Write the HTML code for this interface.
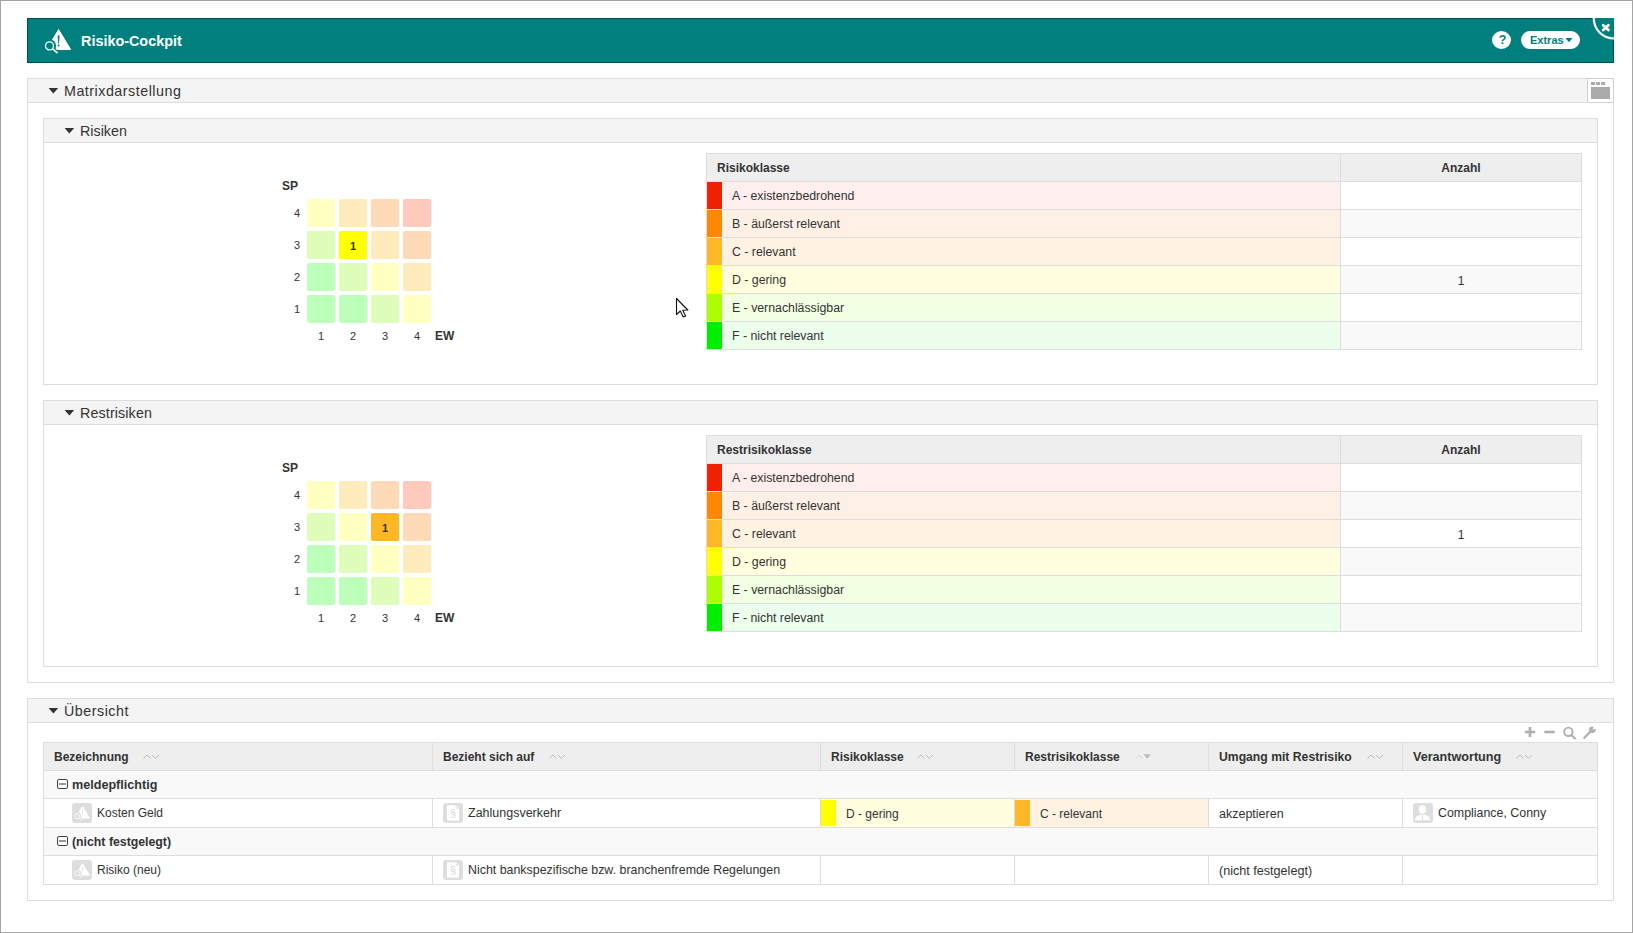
<!DOCTYPE html><html><head><meta charset="utf-8"><style>
*{margin:0;padding:0;box-sizing:border-box}
html,body{width:1633px;height:933px;overflow:hidden;background:#fff}
body{position:relative;font-family:"Liberation Sans",sans-serif;color:#333;font-size:12px}
.a{position:absolute}
.t{position:absolute;white-space:nowrap;line-height:1}
svg{position:absolute;overflow:visible}
.frame{left:0;top:0;width:1633px;height:933px;border:1px solid #a5a5a5}
.hdr{left:27px;top:18px;width:1587px;height:45px;background:#007f7f;border:1px solid #004f4f}
.panel{border:1px solid #ddd;background:#fff}
.ph{background:#f4f4f4;border-bottom:1px solid #ddd}
.tri{width:11px;height:7px}
.cell{position:absolute;width:28px;height:28px;border-radius:2px}
.lbl{position:absolute;font-size:11px;line-height:1;white-space:nowrap}
.ib{position:absolute;width:20px;height:20px;border-radius:3px;background:#dedede}
</style></head><body>
<div class="a frame"></div>
<div class="a" style="left:2px;top:2px;width:1629px;height:2px;background:#fbfbfb"></div>
<div class="a hdr"></div>
<svg style="left:0;top:0" width="1633" height="70" viewBox="0 0 1633 70"><path d="M1592.6 18 A21.4 21.4 0 0 0 1614 39.6 L1614 18 Z" fill="#fff"/><path d="M1594.9 18 A19.1 19.1 0 0 0 1614 37.5 L1614 18 Z" fill="#007f7f"/><path d="M1603.2 25.2 L1608.4 30 M1608.4 25.2 L1603.2 30" stroke="#fff" stroke-width="2.8" stroke-linecap="round"/></svg>
<svg style="left:46px;top:29px" width="30" height="30" viewBox="0 0 30 30"><path d="M12.6 0.6 L24.6 20.4 L0.6 20.4 Z" fill="#fff" stroke="#fff" stroke-width="1" stroke-linejoin="round"/><path d="M11.6 6.8 Q12.6 5.6 13.6 6.8 L13 14.6 L12.2 14.6 Z" fill="#007f7f"/><circle cx="12.6" cy="16.6" r="1" fill="#007f7f"/><circle cx="3.5" cy="16.9" r="6.6" fill="#007f7f"/><path d="M7.3 20.5 L12.5 25" stroke="#007f7f" stroke-width="4.2"/><circle cx="3.5" cy="16.9" r="4" fill="none" stroke="#fff" stroke-width="1.3"/><path d="M6.6 19.8 L11.6 24.1" stroke="#fff" stroke-width="1.6"/></svg>
<div class="t" style="left:81px;top:34px;font-size:14.4px;font-weight:bold;color:#fff">Risiko-Cockpit</div>
<div class="a" style="left:1492px;top:31px;width:19px;height:18px;border-radius:50%;background:#fff"></div>
<div class="t" style="left:1493px;top:34px;width:19px;text-align:center;font-size:12.5px;font-weight:bold;color:#007f7f">?</div>
<div class="a" style="left:1521px;top:31px;width:59px;height:18px;border-radius:9px;background:#fff"></div>
<div class="t" style="left:1530px;top:35px;font-size:11px;font-weight:bold;color:#007f7f">Extras</div>
<svg style="left:1565px;top:38px" width="8" height="5" viewBox="0 0 8 5"><path d="M0.5 0 L7.5 0 L4 4.2 Z" fill="#007f7f"/></svg>
<div class="a panel" style="left:27px;top:78px;width:1587px;height:605px"></div>
<div class="a ph" style="left:28px;top:79px;width:1585px;height:24px"></div>
<svg style="left:48px;top:88px" width="11" height="7" viewBox="0 0 11 7"><path d="M0.6 0 L10.2 0 L5.4 5.4 Z" fill="#333"/></svg>
<div class="t" style="left:64px;top:84px;font-size:14.3px;letter-spacing:0.5px">Matrixdarstellung</div>
<div class="a" style="left:1587px;top:78px;width:27px;height:25px;border:1px solid #d0d0d0;background:#fff"></div>
<div class="a" style="left:1591px;top:82px;width:4px;height:3px;background:#aaa"></div>
<div class="a" style="left:1596px;top:82px;width:4px;height:3px;background:#aaa"></div>
<div class="a" style="left:1601px;top:82px;width:4px;height:3px;background:#aaa"></div>
<div class="a" style="left:1591px;top:87px;width:19px;height:12px;background:#aaa"></div>
<div class="a panel" style="left:43px;top:118px;width:1555px;height:267px"></div>
<div class="a ph" style="left:44px;top:119px;width:1553px;height:24px"></div>
<svg style="left:64px;top:128px" width="11" height="7" viewBox="0 0 11 7"><path d="M0.6 0 L10.2 0 L5.4 5.4 Z" fill="#333"/></svg>
<div class="t" style="left:80px;top:124px;font-size:14.3px;letter-spacing:0px">Risiken</div>
<div class="cell" style="left:307px;top:199px;background:#ffffc0"></div>
<div class="cell" style="left:339px;top:199px;background:#ffebbb"></div>
<div class="cell" style="left:371px;top:199px;background:#ffdab8"></div>
<div class="cell" style="left:403px;top:199px;background:#ffc9bb"></div>
<div class="cell" style="left:307px;top:231px;background:#ddfdb9"></div>
<div class="cell" style="left:339px;top:231px;background:#ffff00"><span style="position:absolute;left:0;top:10px;width:28px;text-align:center;font-size:11px;font-weight:bold;line-height:1">1</span></div>
<div class="cell" style="left:371px;top:231px;background:#ffebbb"></div>
<div class="cell" style="left:403px;top:231px;background:#ffdab8"></div>
<div class="cell" style="left:307px;top:263px;background:#bbffbb"></div>
<div class="cell" style="left:339px;top:263px;background:#ddfdb9"></div>
<div class="cell" style="left:371px;top:263px;background:#ffffc0"></div>
<div class="cell" style="left:403px;top:263px;background:#ffebbb"></div>
<div class="cell" style="left:307px;top:295px;background:#bbffbb"></div>
<div class="cell" style="left:339px;top:295px;background:#bbffbb"></div>
<div class="cell" style="left:371px;top:295px;background:#ddfdb9"></div>
<div class="cell" style="left:403px;top:295px;background:#ffffc0"></div>
<div class="lbl" style="left:282px;top:180px;font-weight:bold;font-size:12px">SP</div>
<div class="lbl" style="left:294px;top:208px">4</div>
<div class="lbl" style="left:294px;top:240px">3</div>
<div class="lbl" style="left:294px;top:272px">2</div>
<div class="lbl" style="left:294px;top:304px">1</div>
<div class="lbl" style="left:318px;top:331px">1</div>
<div class="lbl" style="left:350px;top:331px">2</div>
<div class="lbl" style="left:382px;top:331px">3</div>
<div class="lbl" style="left:414px;top:331px">4</div>
<div class="lbl" style="left:435px;top:330px;font-weight:bold;font-size:12px">EW</div>
<div class="a" style="left:706px;top:153px;width:876px;height:197px;border:1px solid #ddd;background:#fff"></div>
<div class="a" style="left:707px;top:154px;width:874px;height:28px;background:#eee;border-bottom:1px solid #ddd"></div>
<div class="a" style="left:1340px;top:154px;width:1px;height:195px;background:#ddd"></div>
<div class="t" style="left:717px;top:162px;font-size:12px;font-weight:bold">Risikoklasse</div>
<div class="t" style="left:1341px;width:240px;text-align:center;top:162px;font-size:12px;font-weight:bold">Anzahl</div>
<div class="a" style="left:707px;top:182px;width:633px;height:27px;background:#ffeeee"></div>
<div class="a" style="left:707px;top:182px;width:15px;height:27px;background:#ee2200"></div>
<div class="a" style="left:1341px;top:182px;width:240px;height:27px;background:#fff"></div>
<div class="a" style="left:707px;top:209px;width:874px;height:1px;background:#ddd"></div>
<div class="t" style="left:732px;top:190px;font-size:12.3px">A - existenzbedrohend</div>
<div class="a" style="left:707px;top:210px;width:633px;height:27px;background:#fff0e5"></div>
<div class="a" style="left:707px;top:210px;width:15px;height:27px;background:#ff8800"></div>
<div class="a" style="left:1341px;top:210px;width:240px;height:27px;background:#f9f9f9"></div>
<div class="a" style="left:707px;top:237px;width:874px;height:1px;background:#ddd"></div>
<div class="t" style="left:732px;top:218px;font-size:12.3px">B - äußerst relevant</div>
<div class="a" style="left:707px;top:238px;width:633px;height:27px;background:#fff2e3"></div>
<div class="a" style="left:707px;top:238px;width:15px;height:27px;background:#ffb726"></div>
<div class="a" style="left:1341px;top:238px;width:240px;height:27px;background:#fff"></div>
<div class="a" style="left:707px;top:265px;width:874px;height:1px;background:#ddd"></div>
<div class="t" style="left:732px;top:246px;font-size:12.3px">C - relevant</div>
<div class="a" style="left:707px;top:266px;width:633px;height:27px;background:#ffffe0"></div>
<div class="a" style="left:707px;top:266px;width:15px;height:27px;background:#ffff00"></div>
<div class="a" style="left:1341px;top:266px;width:240px;height:27px;background:#f9f9f9"></div>
<div class="a" style="left:707px;top:293px;width:874px;height:1px;background:#ddd"></div>
<div class="t" style="left:732px;top:274px;font-size:12.3px">D - gering</div>
<div class="t" style="left:1341px;width:240px;text-align:center;top:275px;font-size:12px">1</div>
<div class="a" style="left:707px;top:294px;width:633px;height:27px;background:#f3ffe3"></div>
<div class="a" style="left:707px;top:294px;width:15px;height:27px;background:#aaff00"></div>
<div class="a" style="left:1341px;top:294px;width:240px;height:27px;background:#fff"></div>
<div class="a" style="left:707px;top:321px;width:874px;height:1px;background:#ddd"></div>
<div class="t" style="left:732px;top:302px;font-size:12.3px">E - vernachlässigbar</div>
<div class="a" style="left:707px;top:322px;width:633px;height:27px;background:#ecfeec"></div>
<div class="a" style="left:707px;top:322px;width:15px;height:27px;background:#00ee00"></div>
<div class="a" style="left:1341px;top:322px;width:240px;height:27px;background:#f9f9f9"></div>
<div class="t" style="left:732px;top:330px;font-size:12.3px">F - nicht relevant</div>
<div class="a panel" style="left:43px;top:400px;width:1555px;height:267px"></div>
<div class="a ph" style="left:44px;top:401px;width:1553px;height:24px"></div>
<svg style="left:64px;top:410px" width="11" height="7" viewBox="0 0 11 7"><path d="M0.6 0 L10.2 0 L5.4 5.4 Z" fill="#333"/></svg>
<div class="t" style="left:80px;top:406px;font-size:14.3px;letter-spacing:0.12px">Restrisiken</div>
<div class="cell" style="left:307px;top:481px;background:#ffffc0"></div>
<div class="cell" style="left:339px;top:481px;background:#ffebbb"></div>
<div class="cell" style="left:371px;top:481px;background:#ffdab8"></div>
<div class="cell" style="left:403px;top:481px;background:#ffc9bb"></div>
<div class="cell" style="left:307px;top:513px;background:#ddfdb9"></div>
<div class="cell" style="left:339px;top:513px;background:#ffffc0"></div>
<div class="cell" style="left:371px;top:513px;background:#ffb726"><span style="position:absolute;left:0;top:10px;width:28px;text-align:center;font-size:11px;font-weight:bold;line-height:1">1</span></div>
<div class="cell" style="left:403px;top:513px;background:#ffdab8"></div>
<div class="cell" style="left:307px;top:545px;background:#bbffbb"></div>
<div class="cell" style="left:339px;top:545px;background:#ddfdb9"></div>
<div class="cell" style="left:371px;top:545px;background:#ffffc0"></div>
<div class="cell" style="left:403px;top:545px;background:#ffebbb"></div>
<div class="cell" style="left:307px;top:577px;background:#bbffbb"></div>
<div class="cell" style="left:339px;top:577px;background:#bbffbb"></div>
<div class="cell" style="left:371px;top:577px;background:#ddfdb9"></div>
<div class="cell" style="left:403px;top:577px;background:#ffffc0"></div>
<div class="lbl" style="left:282px;top:462px;font-weight:bold;font-size:12px">SP</div>
<div class="lbl" style="left:294px;top:490px">4</div>
<div class="lbl" style="left:294px;top:522px">3</div>
<div class="lbl" style="left:294px;top:554px">2</div>
<div class="lbl" style="left:294px;top:586px">1</div>
<div class="lbl" style="left:318px;top:613px">1</div>
<div class="lbl" style="left:350px;top:613px">2</div>
<div class="lbl" style="left:382px;top:613px">3</div>
<div class="lbl" style="left:414px;top:613px">4</div>
<div class="lbl" style="left:435px;top:612px;font-weight:bold;font-size:12px">EW</div>
<div class="a" style="left:706px;top:435px;width:876px;height:197px;border:1px solid #ddd;background:#fff"></div>
<div class="a" style="left:707px;top:436px;width:874px;height:28px;background:#eee;border-bottom:1px solid #ddd"></div>
<div class="a" style="left:1340px;top:436px;width:1px;height:195px;background:#ddd"></div>
<div class="t" style="left:717px;top:444px;font-size:12px;font-weight:bold">Restrisikoklasse</div>
<div class="t" style="left:1341px;width:240px;text-align:center;top:444px;font-size:12px;font-weight:bold">Anzahl</div>
<div class="a" style="left:707px;top:464px;width:633px;height:27px;background:#ffeeee"></div>
<div class="a" style="left:707px;top:464px;width:15px;height:27px;background:#ee2200"></div>
<div class="a" style="left:1341px;top:464px;width:240px;height:27px;background:#fff"></div>
<div class="a" style="left:707px;top:491px;width:874px;height:1px;background:#ddd"></div>
<div class="t" style="left:732px;top:472px;font-size:12.3px">A - existenzbedrohend</div>
<div class="a" style="left:707px;top:492px;width:633px;height:27px;background:#fff0e5"></div>
<div class="a" style="left:707px;top:492px;width:15px;height:27px;background:#ff8800"></div>
<div class="a" style="left:1341px;top:492px;width:240px;height:27px;background:#f9f9f9"></div>
<div class="a" style="left:707px;top:519px;width:874px;height:1px;background:#ddd"></div>
<div class="t" style="left:732px;top:500px;font-size:12.3px">B - äußerst relevant</div>
<div class="a" style="left:707px;top:520px;width:633px;height:27px;background:#fff2e3"></div>
<div class="a" style="left:707px;top:520px;width:15px;height:27px;background:#ffb726"></div>
<div class="a" style="left:1341px;top:520px;width:240px;height:27px;background:#fff"></div>
<div class="a" style="left:707px;top:547px;width:874px;height:1px;background:#ddd"></div>
<div class="t" style="left:732px;top:528px;font-size:12.3px">C - relevant</div>
<div class="t" style="left:1341px;width:240px;text-align:center;top:529px;font-size:12px">1</div>
<div class="a" style="left:707px;top:548px;width:633px;height:27px;background:#ffffe0"></div>
<div class="a" style="left:707px;top:548px;width:15px;height:27px;background:#ffff00"></div>
<div class="a" style="left:1341px;top:548px;width:240px;height:27px;background:#f9f9f9"></div>
<div class="a" style="left:707px;top:575px;width:874px;height:1px;background:#ddd"></div>
<div class="t" style="left:732px;top:556px;font-size:12.3px">D - gering</div>
<div class="a" style="left:707px;top:576px;width:633px;height:27px;background:#f3ffe3"></div>
<div class="a" style="left:707px;top:576px;width:15px;height:27px;background:#aaff00"></div>
<div class="a" style="left:1341px;top:576px;width:240px;height:27px;background:#fff"></div>
<div class="a" style="left:707px;top:603px;width:874px;height:1px;background:#ddd"></div>
<div class="t" style="left:732px;top:584px;font-size:12.3px">E - vernachlässigbar</div>
<div class="a" style="left:707px;top:604px;width:633px;height:27px;background:#ecfeec"></div>
<div class="a" style="left:707px;top:604px;width:15px;height:27px;background:#00ee00"></div>
<div class="a" style="left:1341px;top:604px;width:240px;height:27px;background:#f9f9f9"></div>
<div class="t" style="left:732px;top:612px;font-size:12.3px">F - nicht relevant</div>
<div class="a panel" style="left:27px;top:698px;width:1587px;height:203px"></div>
<div class="a ph" style="left:28px;top:699px;width:1585px;height:24px"></div>
<svg style="left:48px;top:708px" width="11" height="7" viewBox="0 0 11 7"><path d="M0.6 0 L10.2 0 L5.4 5.4 Z" fill="#333"/></svg>
<div class="t" style="left:64px;top:704px;font-size:14.3px;letter-spacing:0.5px">Übersicht</div>
<svg style="left:1520px;top:724px" width="80" height="18" viewBox="0 0 80 18"><path d="M10 3 L10 13 M4.8 8 L15.2 8" stroke="#b0b0b0" stroke-width="2.7"/><path d="M24.3 8 L34.8 8" stroke="#b0b0b0" stroke-width="2.6"/><circle cx="48.4" cy="7.8" r="4.2" fill="none" stroke="#b0b0b0" stroke-width="1.9"/><path d="M51.4 10.9 L55 14.4" stroke="#b0b0b0" stroke-width="2.1" stroke-linecap="round"/><path d="M64.3 13.8 L70.6 7.5" stroke="#b0b0b0" stroke-width="2.3" stroke-linecap="round"/><circle cx="72.4" cy="5.7" r="3.3" fill="#b0b0b0"/><path d="M72.6 5.5 L74.2 1.2 L77.6 1.2 L77.6 4.4 Z" fill="#fff"/></svg>
<div class="a" style="left:43px;top:742px;width:1555px;height:143px;border:1px solid #ddd;background:#fff"></div>
<div class="a" style="left:44px;top:743px;width:1553px;height:28px;background:#eee;border-bottom:1px solid #ddd"></div>
<div class="a" style="left:44px;top:771px;width:1553px;height:28px;background:#f9f9f9;border-bottom:1px solid #ddd"></div>
<div class="a" style="left:44px;top:799px;width:1553px;height:29px;background:#fff;border-bottom:1px solid #ddd"></div>
<div class="a" style="left:44px;top:828px;width:1553px;height:28px;background:#f9f9f9;border-bottom:1px solid #ddd"></div>
<div class="t" style="left:54px;top:751px;font-size:12px;font-weight:bold">Bezeichnung</div>
<svg style="left:143px;top:753px" width="18" height="8" viewBox="0 0 18 8"><path d="M0.5 5.5 L4 2 L7.5 5.5 M9 2 L12.5 5.5 L16 2" fill="none" stroke="#bdbdbd" stroke-width="1"/></svg>
<div class="a" style="left:432px;top:743px;width:1px;height:27px;background:#ddd"></div>
<div class="a" style="left:432px;top:799px;width:1px;height:28px;background:#ddd"></div>
<div class="a" style="left:432px;top:856px;width:1px;height:28px;background:#ddd"></div>
<div class="t" style="left:443px;top:751px;font-size:12px;font-weight:bold">Bezieht sich auf</div>
<svg style="left:549px;top:753px" width="18" height="8" viewBox="0 0 18 8"><path d="M0.5 5.5 L4 2 L7.5 5.5 M9 2 L12.5 5.5 L16 2" fill="none" stroke="#bdbdbd" stroke-width="1"/></svg>
<div class="a" style="left:820px;top:743px;width:1px;height:27px;background:#ddd"></div>
<div class="a" style="left:820px;top:799px;width:1px;height:28px;background:#ddd"></div>
<div class="a" style="left:820px;top:856px;width:1px;height:28px;background:#ddd"></div>
<div class="t" style="left:831px;top:751px;font-size:12px;font-weight:bold">Risikoklasse</div>
<svg style="left:917px;top:753px" width="18" height="8" viewBox="0 0 18 8"><path d="M0.5 5.5 L4 2 L7.5 5.5 M9 2 L12.5 5.5 L16 2" fill="none" stroke="#bdbdbd" stroke-width="1"/></svg>
<div class="a" style="left:1014px;top:743px;width:1px;height:27px;background:#ddd"></div>
<div class="a" style="left:1014px;top:799px;width:1px;height:28px;background:#ddd"></div>
<div class="a" style="left:1014px;top:856px;width:1px;height:28px;background:#ddd"></div>
<div class="t" style="left:1025px;top:751px;font-size:12px;font-weight:bold">Restrisikoklasse</div>
<svg style="left:1134.5px;top:753px" width="18" height="8" viewBox="0 0 18 8"><path d="M0.5 5.5 L4 2 L7.5 5.5" fill="none" stroke="#cfcfcf" stroke-width="1"/><path d="M8.6 1.2 L15.8 1.2 L12.2 5.8 Z" fill="#bbb"/></svg>
<div class="a" style="left:1208px;top:743px;width:1px;height:27px;background:#ddd"></div>
<div class="a" style="left:1208px;top:799px;width:1px;height:28px;background:#ddd"></div>
<div class="a" style="left:1208px;top:856px;width:1px;height:28px;background:#ddd"></div>
<div class="t" style="left:1219px;top:751px;font-size:12.2px;font-weight:bold">Umgang mit Restrisiko</div>
<svg style="left:1367px;top:753px" width="18" height="8" viewBox="0 0 18 8"><path d="M0.5 5.5 L4 2 L7.5 5.5 M9 2 L12.5 5.5 L16 2" fill="none" stroke="#bdbdbd" stroke-width="1"/></svg>
<div class="a" style="left:1402px;top:743px;width:1px;height:27px;background:#ddd"></div>
<div class="a" style="left:1402px;top:799px;width:1px;height:28px;background:#ddd"></div>
<div class="a" style="left:1402px;top:856px;width:1px;height:28px;background:#ddd"></div>
<div class="t" style="left:1413px;top:751px;font-size:12.6px;font-weight:bold">Verantwortung</div>
<svg style="left:1516px;top:753px" width="18" height="8" viewBox="0 0 18 8"><path d="M0.5 5.5 L4 2 L7.5 5.5 M9 2 L12.5 5.5 L16 2" fill="none" stroke="#bdbdbd" stroke-width="1"/></svg>
<div class="a" style="left:57px;top:779px;width:11px;height:10px;border:1px solid #444;border-radius:2px;background:#fff"></div>
<div class="a" style="left:59px;top:783px;width:7px;height:1.5px;background:#999"></div>
<div class="a" style="left:57px;top:836px;width:11px;height:10px;border:1px solid #444;border-radius:2px;background:#fff"></div>
<div class="a" style="left:59px;top:840px;width:7px;height:1.5px;background:#999"></div>
<div class="t" style="left:72px;top:779px;font-size:12.6px;font-weight:bold">meldepflichtig</div>
<div class="t" style="left:72px;top:836px;font-size:12.3px;font-weight:bold">(nicht festgelegt)</div>
<div class="ib" style="left:72px;top:803px"></div>
<svg style="left:74.6px;top:806px" width="18.0" height="18.0" viewBox="0 0 30 30"><path d="M12.6 0.6 L24.6 20.4 L0.6 20.4 Z" fill="#fff" stroke="#fff" stroke-width="1" stroke-linejoin="round"/><path d="M11.6 6.8 Q12.6 5.6 13.6 6.8 L13 14.6 L12.2 14.6 Z" fill="#dedede"/><circle cx="12.6" cy="16.6" r="1" fill="#dedede"/><circle cx="3.5" cy="16.9" r="6.6" fill="#dedede"/><path d="M7.3 20.5 L12.5 25" stroke="#dedede" stroke-width="4.2"/><circle cx="3.5" cy="16.9" r="4" fill="none" stroke="#fff" stroke-width="1.3"/><path d="M6.6 19.8 L11.6 24.1" stroke="#fff" stroke-width="1.6"/></svg>
<div class="ib" style="left:72px;top:860px"></div>
<svg style="left:74.6px;top:863px" width="18.0" height="18.0" viewBox="0 0 30 30"><path d="M12.6 0.6 L24.6 20.4 L0.6 20.4 Z" fill="#fff" stroke="#fff" stroke-width="1" stroke-linejoin="round"/><path d="M11.6 6.8 Q12.6 5.6 13.6 6.8 L13 14.6 L12.2 14.6 Z" fill="#dedede"/><circle cx="12.6" cy="16.6" r="1" fill="#dedede"/><circle cx="3.5" cy="16.9" r="6.6" fill="#dedede"/><path d="M7.3 20.5 L12.5 25" stroke="#dedede" stroke-width="4.2"/><circle cx="3.5" cy="16.9" r="4" fill="none" stroke="#fff" stroke-width="1.3"/><path d="M6.6 19.8 L11.6 24.1" stroke="#fff" stroke-width="1.6"/></svg>
<div class="ib" style="left:443px;top:803px"></div>
<svg style="left:443px;top:803px" width="20" height="20" viewBox="0 0 20 20"><path d="M4 2.3 L13.3 2.3 L16 5 L16 17.6 L4 17.6 Z" fill="#fff"/><path d="M13.2 2 L13.2 5.2 L16.3 5.2" fill="none" stroke="#dedede" stroke-width="1"/></svg>
<div class="t" style="left:443px;top:808px;width:20px;text-align:center;font-size:11px;color:#d6d6d6">§</div>
<div class="ib" style="left:443px;top:860px"></div>
<svg style="left:443px;top:860px" width="20" height="20" viewBox="0 0 20 20"><path d="M4 2.3 L13.3 2.3 L16 5 L16 17.6 L4 17.6 Z" fill="#fff"/><path d="M13.2 2 L13.2 5.2 L16.3 5.2" fill="none" stroke="#dedede" stroke-width="1"/></svg>
<div class="t" style="left:443px;top:865px;width:20px;text-align:center;font-size:11px;color:#d6d6d6">§</div>
<div class="ib" style="left:1413px;top:803px"></div>
<svg style="left:1413px;top:803px" width="20" height="20" viewBox="0 0 20 20"><ellipse cx="9.5" cy="6.4" rx="3.6" ry="4.2" fill="#fff"/><path d="M2 17.2 C2.5 13.5 5 12.6 7.5 11.6 L11.6 11.6 C14 12.6 16.5 13.5 17 17.2 Z" fill="#fff"/><path d="M9.5 11.5 L9.5 17.2" stroke="#dedede" stroke-width="1"/></svg>
<div class="t" style="left:97px;top:807px;font-size:12px">Kosten Geld</div>
<div class="t" style="left:97px;top:864px;font-size:12px">Risiko (neu)</div>
<div class="t" style="left:468px;top:807px;font-size:12.5px">Zahlungsverkehr</div>
<div class="t" style="left:468px;top:864px;font-size:12.4px">Nicht bankspezifische bzw. branchenfremde Regelungen</div>
<div class="a" style="left:821px;top:799px;width:193px;height:28px;background:#ffffe0"></div>
<div class="a" style="left:821px;top:800px;width:15px;height:26px;background:#ffff00"></div>
<div class="t" style="left:846px;top:808px;font-size:12px">D - gering</div>
<div class="a" style="left:1015px;top:799px;width:193px;height:28px;background:#fff2e3"></div>
<div class="a" style="left:1015px;top:800px;width:15px;height:26px;background:#ffb726"></div>
<div class="t" style="left:1040px;top:808px;font-size:12px">C - relevant</div>
<div class="t" style="left:1219px;top:808px;font-size:12.5px">akzeptieren</div>
<div class="t" style="left:1219px;top:865px;font-size:12.6px">(nicht festgelegt)</div>
<div class="t" style="left:1438px;top:807px;font-size:12.4px">Compliance, Conny</div>
<svg style="left:676px;top:298px" width="14" height="21" viewBox="0 0 14 21"><path d="M0.5 0.5 L0.5 16.5 L4.3 13 L7.2 19 L9.6 18 L6.8 12.2 L11.8 12 Z" fill="#fff" stroke="#111" stroke-width="1.1" stroke-linejoin="round"/></svg>
</body></html>
